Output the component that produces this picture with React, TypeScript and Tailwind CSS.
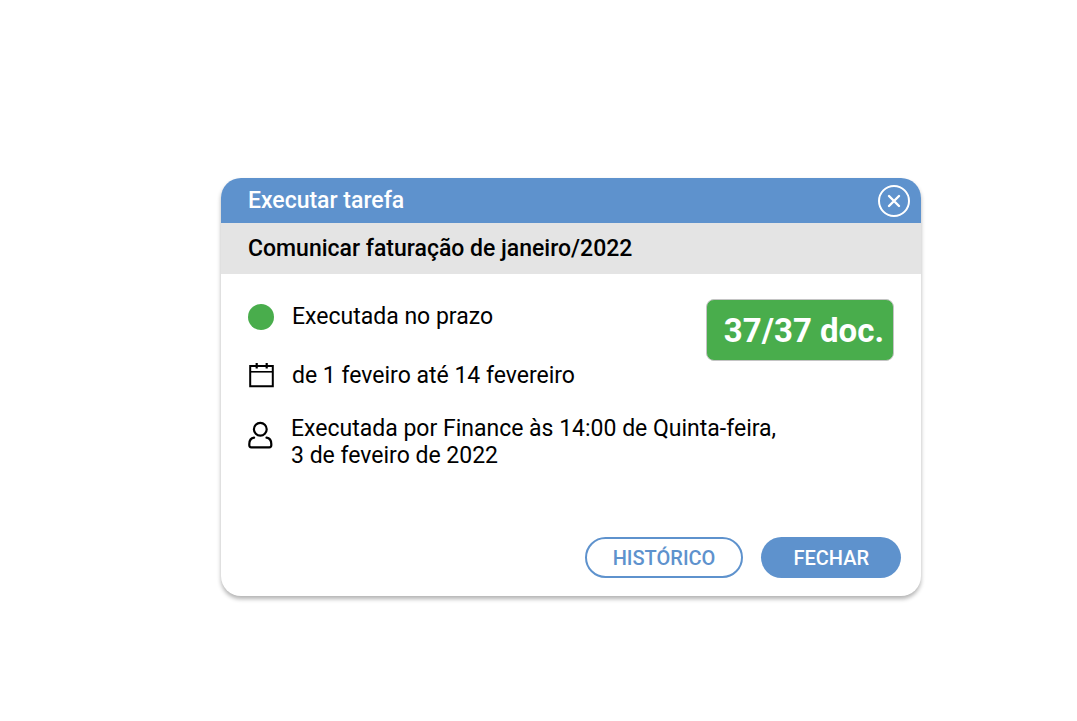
import React from 'react';

type Task = {
  title: string;
  status: string;
  period: string;
  executedBy: string;
  executedOn: string;
  docsDone: number;
  docsTotal: number;
};

const task: Task = {
  title: 'Comunicar faturação de janeiro/2022',
  status: 'Executada no prazo',
  period: 'de 1 feveiro até 14 fevereiro',
  executedBy: 'Executada por Finance às 14:00 de Quinta-feira,',
  executedOn: '3 de feveiro de 2022',
  docsDone: 37,
  docsTotal: 37,
};

function CloseIcon() {
  return (
    <svg className="w-8 h-8" viewBox="0 0 32 32" fill="none" stroke="currentColor" strokeWidth="2" aria-hidden="true">
      <circle cx="16" cy="16" r="15" />
      <path d="M11 11l10 10M21 11L11 21" strokeWidth="2.4" strokeLinecap="round" />
    </svg>
  );
}

function CalendarIcon() {
  return (
    <svg className="w-[26px] h-[26px] shrink-0" viewBox="0 0 26 26" fill="none" stroke="currentColor" strokeWidth="2" aria-hidden="true">
      <path d="M2.2 3h22.6v20.2H2.2z" />
      <path d="M2 8.8h23" strokeWidth="1.6" />
      <path d="M8.7 0v5.4M18.7 0v5.4" strokeWidth="2.2" />
    </svg>
  );
}

function UserIcon() {
  return (
    <svg className="w-[26px] h-7 shrink-0" viewBox="0 0 26 28" fill="none" stroke="currentColor" strokeWidth="2.2" strokeLinecap="round" aria-hidden="true">
      <circle cx="12.3" cy="8.2" r="6.4" />
      <path d="M6.1 16.7C3.1 17.2 1.3 19.8 1.3 23v1.3a2 2 0 0 0 2 2h18a2 2 0 0 0 2-2V23c0-3.2-1.8-5.8-4.8-6.3" />
    </svg>
  );
}

export default function App() {
  return (
    <main className="min-h-screen flex items-center justify-center bg-white pl-[65px] pt-[53px] font-[Roboto,sans-serif] text-black">
      <section
        role="dialog"
        aria-labelledby="dialog-title"
        className="w-full max-w-[700px] rounded-[20px] overflow-hidden bg-white shadow-[0_3px_4px_rgba(0,0,0,0.3)]"
      >
        <header className="h-[45px] pl-[27px] pr-[11px] flex items-center justify-between bg-[#5e92cd] text-white">
          <h1 id="dialog-title" className="text-[23px] leading-[27px] font-medium">Executar tarefa</h1>
          <button type="button" aria-label="Fechar janela" className="cursor-pointer">
            <CloseIcon />
          </button>
        </header>

        <h2 className="px-[27px] py-3 bg-[#e4e4e4] text-[23px] leading-[27px] font-medium">{task.title}</h2>

        <div className="px-[27px] pt-[25px]">
          <div className="flex items-start justify-between">
            <ul className="text-[23px] leading-[27px]">
              <li className="flex items-center gap-[18px] pt-1">
                <span className="w-[26px] h-[26px] shrink-0 rounded-full bg-[#49ad4c]" />
                {task.status}
              </li>
              <li className="flex items-center gap-[18px] pt-8">
                <CalendarIcon />
                {task.period}
              </li>
            </ul>
            <p className="rounded-lg border border-[#c4c4c4] bg-[#49ad4c] pl-[17px] pr-[9px] pt-[13px] pb-[11px] text-[33px] leading-[36px] font-bold text-white whitespace-nowrap">
              {task.docsDone}/{task.docsTotal} doc.
            </p>
          </div>
          <div className="flex items-start gap-[17px] pt-[26px] text-[23px] leading-[27px]">
            <div className="pt-1.5">
              <UserIcon />
            </div>
            <p>
              {task.executedBy}
              <br />
              {task.executedOn}
            </p>
          </div>
        </div>

        <footer className="flex justify-end gap-[18px] pt-[68px] pr-5 pb-[18px] text-xl font-medium">
          <button type="button" className="h-[41px] px-[26px] rounded-full border-2 border-[#5e92cd] text-[#5e92cd] cursor-pointer">
            HISTÓRICO
          </button>
          <button type="button" className="h-[41px] px-8 rounded-full bg-[#5e92cd] text-white cursor-pointer">
            FECHAR
          </button>
        </footer>
      </section>
    </main>
  );
}
